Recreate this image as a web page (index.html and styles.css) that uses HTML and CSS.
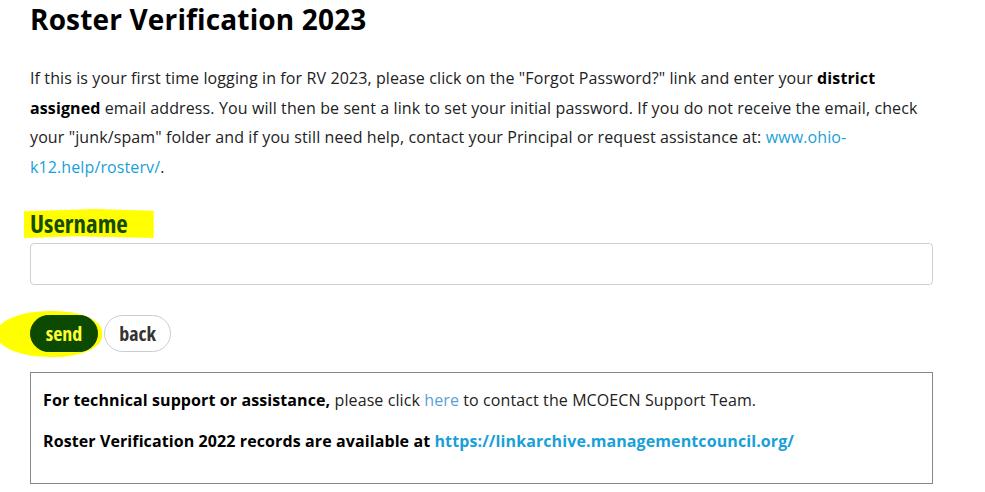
FILE: index.html
```html
<!DOCTYPE html>
<html lang="en">
<head>
<meta charset="utf-8">
<title>Roster Verification 2023</title>
<link rel="stylesheet" href="styles.css">
</head>
<body>
<main class="page">
  <h1 class="title">Roster Verification 2023</h1>
  <p class="intro">If this is your first time logging in for RV 2023, please click on the "Forgot Password?" link and enter your <strong>district assigned</strong> email address. You will then be sent a link to set your initial password. If you do not receive the email, check your "junk/spam" folder and if you still need help, contact your Principal or request assistance at: <a class="link" href="#">www.ohio-k12.help/rosterv/</a>.</p>
  <form class="form">
    <label class="label" for="username"><span class="label-text">Username</span></label>
    <input class="input" id="username" type="text">
    <div class="actions">
      <span class="send-wrap"><button class="btn btn-send" type="button">send</button></span>
      <button class="btn btn-back" type="button">back</button>
    </div>
  </form>
  <section class="info">
    <p class="info-line"><strong>For technical support or assistance,</strong> please click <a class="link-light" href="#">here</a> to contact the MCOECN Support Team.</p>
    <p class="info-line"><strong>Roster Verification 2022 records are available at <a class="link" href="#">https://linkarchive.managementcouncil.org/</a></strong></p>
  </section>
</main>
</body>
</html>
```

FILE: styles.css
```css
html, body {
  margin: 0;
  padding: 0;
  background: #fff;
}
body {
  font-family: "Open Sans", "Noto Sans", sans-serif;
  color: #222;
}
.page {
  width: 903px;
  padding: 0 30px;
}
.title {
  margin: 0;
  font-family: "Open Sans", "Noto Sans", sans-serif;
  font-size: 28px;
  font-weight: 700;
  line-height: 39px;
  letter-spacing: 0.15px;
  color: #000;
}
.intro {
  margin: 25px 0 0;
  font-size: 16px;
  line-height: 29.5px;
  letter-spacing: 0.11px;
  color: #222;
}
.intro strong { color: #000; }
.link {
  color: #1a9fd8;
  text-decoration: none;
}
.link-light {
  color: #5b9fd6;
  text-decoration: none;
}
.form {
  margin: 27px 0 0;
  display: flex;
  flex-direction: column;
  align-items: flex-start;
}
.label {
  display: block;
  height: 30px;
  line-height: 30px;
}
.label-text {
  display: inline-block;
  font-family: "Open Sans", "DejaVu Sans", sans-serif;
  font-stretch: 75%;
  font-weight: 700;
  font-size: 25px;
  color: #154c00;
  background: #ffff00;
  padding: 1px 26px 1px 6px;
  margin-left: -6px;
  line-height: 27px;
  clip-path: polygon(0 8%, 55% 0, 100% 6%, 100% 100%, 40% 94%, 0 100%);
}
.input {
  margin-top: 4px;
  width: 903px;
  height: 42px;
  box-sizing: border-box;
  border: 1px solid #cfcfcf;
  border-radius: 4px;
  padding: 6px 12px;
  font-size: 16px;
}
.actions {
  margin-top: 30px;
  display: flex;
  align-items: center;
  gap: 6px;
}
.send-wrap {
  position: relative;
  display: inline-flex;
}
.send-wrap::before {
  content: "";
  position: absolute;
  left: -34px;
  top: -4px;
  width: 106px;
  height: 46px;
  background: #ffff00;
  border-radius: 50% 45% 45% 50%;
  z-index: 0;
}
.btn {
  position: relative;
  z-index: 1;
  height: 37px;
  box-sizing: border-box;
  border-radius: 19px;
  font-family: "Open Sans", "DejaVu Sans", sans-serif;
  font-stretch: 75%;
  font-weight: 700;
  font-size: 20px;
  line-height: 1;
  cursor: pointer;
}
.btn-send {
  width: 68px;
  background: #0b4a00;
  color: #ffff33;
  border: 1px solid #0b4a00;
}
.btn-back {
  width: 67px;
  background: #fff;
  color: #333;
  border: 1px solid #cccccc;
}
.info {
  margin-top: 20px;
  width: 903px;
  box-sizing: border-box;
  border: 1px solid #888;
  padding: 15px 12px 13px;
}
.info-line {
  margin: 0 0 17px;
  font-size: 16px;
  line-height: 24px;
  letter-spacing: 0.1px;
  color: #222;
}
.info-line strong { color: #000; }
```
